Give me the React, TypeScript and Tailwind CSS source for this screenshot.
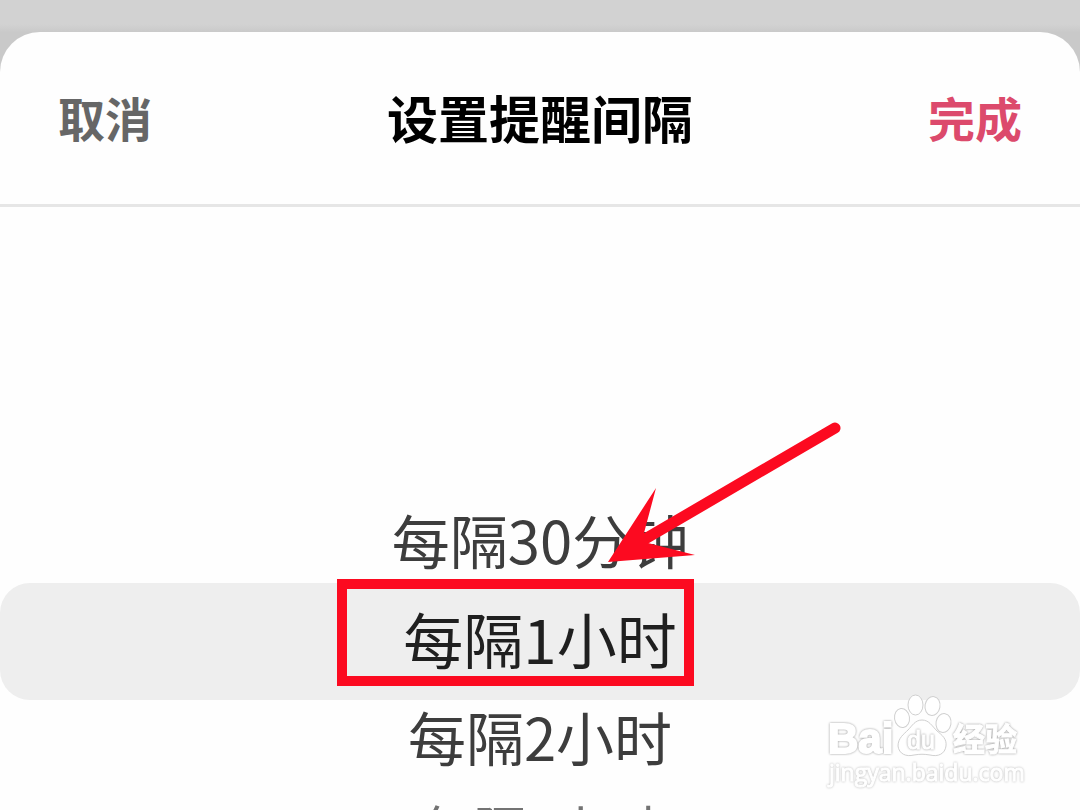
import { useState } from "react";

const options = [
  { label: "每隔30分钟", row: "h-[80px] text-[58px] text-[#3d3d3d]" },
  { label: "每隔1小时", row: "h-[117px] text-[60px] text-[#1f1f1f]" },
  { label: "每隔2小时", row: "h-[80px] text-[58px] text-[#3d3d3d]" },
  { label: "每隔3小时", row: "h-[104px] text-[52px] text-[#737373]" },
];

function Pointer() {
  return (
    <div className="pointer-events-none absolute -top-1 left-1/2 h-[107px] w-[357px] -translate-x-[203px] border-10 border-[#fc0a20]">
      <svg
        className="absolute -top-[169px] left-[253px] h-[160px] w-[250px]"
        viewBox="600 420 250 160"
        fill="#fc0a20"
        aria-hidden="true"
      >
        <path d="M645 539 835 428" stroke="#fc0a20" strokeWidth="11" strokeLinecap="round" />
        <path d="M608 562 656 488 644 533 648 543 695 555Z" />
      </svg>
    </div>
  );
}

const halo = "[filter:drop-shadow(0_0_1px_#999999)]";
const softHalo = "[filter:drop-shadow(0_0_1px_#b8b8b8)]";

function Watermark() {
  return (
    <svg
      className="pointer-events-none absolute right-10 bottom-[10px] h-[120px] w-[230px]"
      viewBox="0 0 230 120"
      fill="#ffffff"
      stroke="#ffffff"
      fontFamily="'Liberation Sans', 'Noto Sans CJK SC', sans-serif"
      fontWeight="700"
    >
      <text className={halo} x="18" y="73" fontSize="42" strokeWidth="2">Bai</text>
      <text className={halo} x="143" y="71" fontSize="32" strokeWidth="1" fontFamily="'Noto Sans CJK SC', sans-serif">
        经验
      </text>
      <g stroke="#d0d0d0" strokeWidth="1">
        <ellipse cx="92" cy="38" rx="7.5" ry="9.5" transform="rotate(-8 92 38)" />
        <ellipse cx="105.5" cy="25" rx="7.5" ry="10" />
        <ellipse cx="122.5" cy="26" rx="7.5" ry="9.5" transform="rotate(10 122.5 26)" />
        <ellipse cx="133.5" cy="43" rx="7.5" ry="9.5" transform="rotate(10 133.5 43)" />
        <path d="M112 40C119 40 122 46 127 51C132 55 137 59 136 66C135 74 128 77 120 75C114 74 110 74 104 75C96 77 89 74 88 66C88 58 94 54 98 50C102 46 105 40 112 40Z" />
      </g>
      <text className={halo} x="97" y="69" fontSize="25" fontWeight="400" strokeWidth="1">du</text>
      <text className={softHalo} x="19" y="101" fontSize="23" fontWeight="400" strokeWidth="1" fontFamily="'Open Sans', sans-serif">
        jingyan.baidu.com
      </text>
    </svg>
  );
}

export default function App() {
  const [selected, setSelected] = useState(1);

  return (
    <div className="relative h-screen overflow-hidden bg-linear-to-b from-[#d2d2d2] from-3% to-[#c9c9c9] to-4% pt-8 font-['Noto_Sans_CJK_SC',sans-serif]">
      <main className="flex h-full flex-col rounded-t-[40px] bg-[#fefefe]">
        <header className="grid h-[175px] shrink-0 grid-cols-[1fr_auto_1fr] items-center border-b-3 border-[#e6e6e6] px-[58px] pb-0.5">
          <button type="button" className="justify-self-start text-[47px] leading-[60px] font-bold text-[#666666]">
            取消
          </button>
          <h1 className="text-[51px] leading-[60px] font-bold text-black">设置提醒间隔</h1>
          <button type="button" className="justify-self-end text-[47px] leading-[60px] font-bold text-[#dc4a6c]">
            完成
          </button>
        </header>

        <div role="listbox" aria-label="设置提醒间隔" className="flex flex-col pt-[296px]">
          {options.map((option, index) => (
            <div key={option.label} className={index === 1 ? "relative rounded-[30px] bg-[#eeeeee]" : ""}>
              <button
                type="button"
                role="option"
                aria-selected={index === selected}
                onClick={() => setSelected(index)}
                className={`flex w-full items-center justify-center pb-2 leading-none ${option.row}`}
              >
                {option.label}
              </button>
              {index === 1 && <Pointer />}
            </div>
          ))}
        </div>
      </main>
      <Watermark />
    </div>
  );
}
